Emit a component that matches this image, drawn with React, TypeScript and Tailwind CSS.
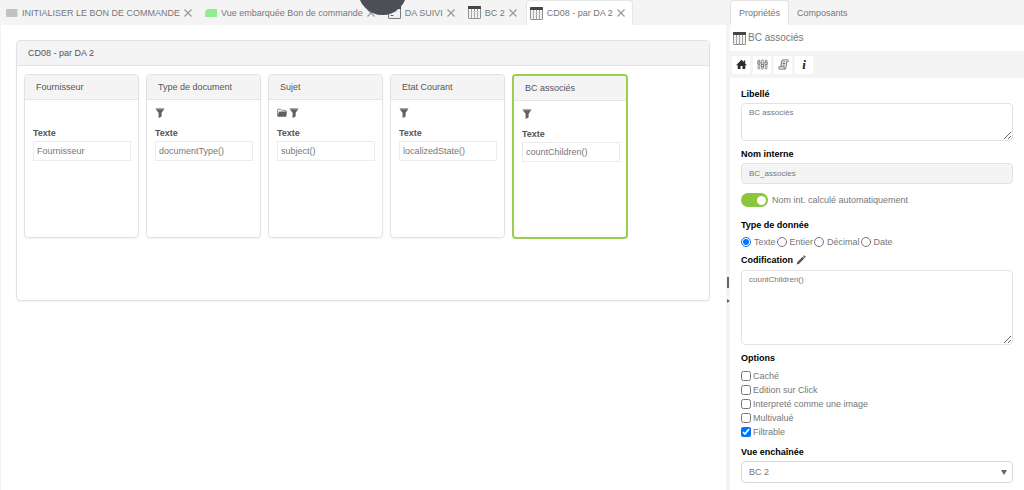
import { useState } from "react";
import type { ReactNode } from "react";

function TableIcon({ className }: { className: string }) {
  return (
    <svg viewBox="0 0 13 13" className={className} aria-hidden="true">
      <rect x="0.5" y="0.5" width="12" height="12" rx="0.5" fill="#fff" stroke="#8f8f8f" />
      <path d="M3.5 3v9.5M6.5 3v9.5M9.5 3v9.5" stroke="#9a9a9a" strokeWidth="1" />
      <path d="M1 5.5h11M1 7.7h11M1 10h11" stroke="#d0d0d0" strokeWidth="0.7" />
      <rect width="13" height="3" rx="0.5" fill="#454545" />
    </svg>
  );
}

function FormIcon({ className }: { className: string }) {
  return (
    <svg viewBox="0 0 13 13" className={className} aria-hidden="true">
      <rect x="0.5" y="0.5" width="12" height="12" rx="0.5" fill="#f0f0f0" stroke="#7a7a7a" />
      <rect width="13" height="3" rx="0.5" fill="#454545" />
      <path d="M2.5 5.5h5M2.5 9.5h3" stroke="#666" />
    </svg>
  );
}

function GrayIcon({ className }: { className: string }) {
  return (
    <svg viewBox="0 0 12 12" className={className} aria-hidden="true">
      <rect y="2" width="11.5" height="8" rx="1" fill="#bdc3c7" />
    </svg>
  );
}

function GreenIcon({ className }: { className: string }) {
  return (
    <svg viewBox="0 0 12 12" className={className} aria-hidden="true">
      <path d="M0 10V4.5L2.2 2H12v8z" fill="#90ee90" />
    </svg>
  );
}

function FilterIcon() {
  return (
    <svg viewBox="0 0 10 10" className="size-[10px]" aria-hidden="true">
      <path d="M0.8 0.2h8.4v1.6H0.8z" fill="#8a8a8a" />
      <path d="M0.9 1.6h8.2L6.6 4.8v3.6L3.6 10V4.8z" fill="#5f5f5f" />
    </svg>
  );
}

function FolderIcon() {
  return (
    <svg viewBox="0 0 10 10" className="size-[10px]" aria-hidden="true">
      <path d="M0.6 8V1.3h3.2l.8 1h4.2V4" fill="none" stroke="#858585" strokeWidth="0.9" />
      <path d="M1.9 3.4H10L9.2 8.7H0.4z" fill="#606060" />
    </svg>
  );
}

function HomeIcon() {
  return (
    <svg viewBox="0 0 12 12" className="size-[11px]" aria-hidden="true">
      <path d="M6 .8 0 6.8h1.9V11h3V7.6h2.2V11h3V6.8H12L10 4.8V1.6H8.5v1.7z" fill="#2b2b2b" />
    </svg>
  );
}

function SlidersIcon() {
  return (
    <svg viewBox="0 0 12 12" className="size-[11px]" aria-hidden="true">
      <g fill="#fff" stroke="#6a6a6a" strokeWidth="0.8">
        <rect x="1.2" y="1" width="1.8" height="10" rx="0.6" />
        <rect x="5.1" y="1" width="1.8" height="10" rx="0.6" />
        <rect x="9" y="1" width="1.8" height="10" rx="0.6" />
      </g>
      <g fill="#fff" stroke="#555" strokeWidth="0.9">
        <rect x="0.8" y="3" width="2.6" height="2.4" rx="0.8" />
        <rect x="4.7" y="6" width="2.6" height="2.4" rx="0.8" />
        <rect x="8.6" y="3.6" width="2.6" height="2.4" rx="0.8" />
      </g>
    </svg>
  );
}

function ScriptIcon() {
  return (
    <svg viewBox="0 0 12 12" className="size-[11px]" aria-hidden="true">
      <g fill="none" stroke="#666" strokeWidth="1">
        <path d="M3.2 8.4 4.1 2Q4.3 1 5.2 1h5.3q1 0 .9 1.1t-1.1 1H9.4L8.5 10q-.2 1-1.1 1H1.8Q.8 11 .9 10l.2-1.5h5.7L6.7 10q0 .9.7 1" />
        <path d="M5.2 3.1h2.8M5 4.9h2.8M4.8 6.7h2.6" />
      </g>
    </svg>
  );
}

function PencilIcon() {
  return (
    <svg viewBox="0 0 10 10" className="size-[10px]" aria-hidden="true">
      <path d="M.6 9.5 1.4 7 6.6 1.8l1.7 1.7L3.1 8.7zM7.1 1.3l.7-.7q.5-.4 1 .1l.6.6q.5.5.1 1l-.7.7z" fill="#555" />
    </svg>
  );
}

function CloseIcon() {
  return (
    <svg viewBox="0 0 8 8" className="size-2" aria-hidden="true">
      <path d="M.5.5l7 7M7.5.5l-7 7" stroke="#999" strokeWidth="1.2" />
    </svg>
  );
}

const tabs = [
  { label: "INITIALISER LE BON DE COMMANDE", Icon: GrayIcon, iconSize: "size-3" },
  { label: "Vue embarquée Bon de commande", Icon: GreenIcon, iconSize: "size-3" },
  { label: "DA SUIVI", Icon: FormIcon, iconSize: "size-[13px]" },
  { label: "BC 2", Icon: TableIcon, iconSize: "size-[13px]" },
  { label: "CD08 - par DA 2", Icon: TableIcon, iconSize: "size-[13px]", active: true },
];

function TabBar() {
  return (
    <div className="relative flex h-[25px] gap-px overflow-hidden bg-[#f4f4f4] pl-0.5">
      {tabs.map(({ label, Icon, iconSize, active }) => (
        <div
          key={label}
          className={
            active
              ? "flex items-center gap-1 rounded-t-sm border border-b-0 border-[#e6e6e6] bg-white pr-[7px] pl-[3px]"
              : "flex items-center gap-1 pr-2 pl-1"
          }
        >
          <button type="button" className="flex items-center gap-1 whitespace-nowrap">
            <Icon className={iconSize} />
            {label}
          </button>
          <button type="button" aria-label={`Fermer ${label}`}>
            <CloseIcon />
          </button>
        </div>
      ))}
      <div className="absolute -top-[34px] left-[358px] size-[49px] rounded-full bg-[#4d5057]" />
    </div>
  );
}

const columns = [
  { title: "Fournisseur", value: "Fournisseur", filter: false, folder: false, selected: false },
  { title: "Type de document", value: "documentType()", filter: true, folder: false, selected: false },
  { title: "Sujet", value: "subject()", filter: true, folder: true, selected: false },
  { title: "Etat Courant", value: "localizedState()", filter: true, folder: false, selected: false },
  { title: "BC associés", value: "countChildren()", filter: true, folder: false, selected: true },
];

function Column({ title, value, filter, folder, selected }: (typeof columns)[number]) {
  return (
    <section
      className={
        selected
          ? "min-h-[165px] w-[116px] shrink-0 overflow-hidden rounded-sm border-2 border-[#98cf4f]"
          : "min-h-[164px] w-[115px] shrink-0 overflow-hidden rounded-sm border border-[#e2e2e2] shadow-xs"
      }
    >
      <h3 className="flex h-[25px] items-center border-b border-[#e4e4e4] bg-[#f4f4f4] px-[11px] text-[#555]">
        {title}
      </h3>
      <div className="px-2 pt-2">
        <div className="flex h-[10px] items-center gap-0.5">
          {folder && <FolderIcon />}
          {filter && <FilterIcon />}
        </div>
        <label className="block pt-[9px] font-bold text-[#555]">
          <span className="block h-[14px]">Texte</span>
          <input
            defaultValue={value}
            className="block h-5 w-[98px] border border-[#ebebeb] px-[3px] font-normal text-[#777] outline-none"
          />
        </label>
      </div>
    </section>
  );
}

function FieldLabel({ htmlFor, children }: { htmlFor: string; children: ReactNode }) {
  return (
    <label htmlFor={htmlFor} className="flex h-3 items-center gap-1 font-bold text-black">
      {children}
    </label>
  );
}

const types = ["Texte", "Entier", "Décimal", "Date"];
const options = ["Caché", "Edition sur Click", "Interpreté comme une image", "Multivalué", "Filtrable"];

function Properties() {
  const [auto, setAuto] = useState(true);
  return (
    <aside className="flex w-[294px] shrink-0 flex-col bg-white">
      <div className="flex h-[25px] bg-[#f4f4f4]">
        <button type="button" className="rounded-t-sm border border-b-0 border-[#e2e2e2] bg-white px-2">
          Propriétés
        </button>
        <button type="button" className="px-2">Composants</button>
      </div>
      <div className="flex h-[26px] items-center gap-0.5 pl-[3px] text-[10px]">
        <TableIcon className="size-[13px]" />
        BC associés
      </div>
      <div className="flex h-[27px] items-center gap-[3px] bg-[#f4f4f4] pl-[2px]">
        <button type="button" aria-label="Accueil" className="flex size-[18px] items-center justify-center bg-white">
          <HomeIcon />
        </button>
        <button type="button" aria-label="Réglages" className="flex size-[18px] items-center justify-center bg-white">
          <SlidersIcon />
        </button>
        <button type="button" aria-label="Script" className="flex size-[18px] items-center justify-center bg-white">
          <ScriptIcon />
        </button>
        <button
          type="button"
          className="flex size-[18px] items-center justify-center bg-white font-['Liberation_Serif',serif] text-[13px] font-bold text-[#222] italic"
        >
          i
        </button>
      </div>

      <form className="flex flex-col px-[11px] pt-[10px] pb-[7px]">
        <FieldLabel htmlFor="libelle">Libellé</FieldLabel>
        <textarea
          id="libelle"
          defaultValue="BC associés"
          className="mt-[3px] h-[38px] rounded-sm border border-[#e2e2e2] px-[7px] py-[3px] text-[8px] outline-none"
        />

        <div className="mt-[7px] flex flex-col gap-[3px]">
          <FieldLabel htmlFor="nom">Nom interne</FieldLabel>
          <input
            id="nom"
            readOnly
            defaultValue="BC_associes"
            className="h-[21px] rounded-sm border border-[#e2e2e2] bg-[#f4f4f4] px-[7px] text-[8px] outline-none"
          />
        </div>

        <label className="mt-[9px] flex h-[14px] items-center gap-1">
          <input
            type="checkbox"
            role="switch"
            checked={auto}
            onChange={(e) => setAuto(e.target.checked)}
            className="flex h-[14px] w-[27px] appearance-none items-center rounded-full bg-[#bbb] px-[2px] before:size-[9px] before:rounded-full before:bg-white checked:justify-end checked:bg-[#8cc63f]"
          />
          Nom int. calculé automatiquement
        </label>

        <fieldset className="mt-3">
          <legend className="h-3 font-bold text-black">Type de donnée</legend>
          <div className="flex gap-px pt-[5px]">
            {types.map((type) => (
              <label key={type} className="flex h-3 items-center gap-[3px]">
                <input
                  type="radio"
                  name="type"
                  defaultChecked={type === "Texte"}
                  className="size-[10px] accent-[#0075ff]"
                />
                {type}
              </label>
            ))}
          </div>
        </fieldset>

        <div className="mt-[6px] flex items-center gap-[3px]">
          <FieldLabel htmlFor="codification">Codification</FieldLabel>
          <button type="button" aria-label="Modifier la codification">
            <PencilIcon />
          </button>
        </div>
        <textarea
          id="codification"
          defaultValue="countChildren()"
          className="mt-[4px] h-[75px] rounded-sm border border-[#e2e2e2] px-[7px] py-[3px] text-[8px] outline-none"
        />

        <fieldset className="mt-[7px]">
          <legend className="h-3 font-bold text-black">Options</legend>
          <div className="flex flex-col items-start gap-[2px] pt-[6px]">
            {options.map((option) => (
              <label key={option} className="flex h-3 items-center gap-[2px]">
                <input
                  type="checkbox"
                  defaultChecked={option === "Filtrable"}
                  className="size-[10px] accent-[#0075ff]"
                />
                {option}
              </label>
            ))}
          </div>
        </fieldset>

        <div className="mt-2 flex flex-col gap-[3px]">
          <FieldLabel htmlFor="vue">Vue enchaînée</FieldLabel>
          <div className="relative">
            <select
              id="vue"
              className="h-[22px] w-full appearance-none rounded-sm border border-[#d9d9d9] bg-white px-[7px] outline-none"
            >
              <option>BC 2</option>
            </select>
            <svg viewBox="0 0 6 5" className="pointer-events-none absolute top-[9px] right-[6px] h-[5px] w-[6px]" aria-hidden="true">
              <path d="M0 0h6L3 5z" fill="#666" />
            </svg>
          </div>
        </div>
      </form>
    </aside>
  );
}

export default function App() {
  return (
    <div className="flex min-h-screen bg-white font-['Liberation_Sans',Arial,sans-serif] text-[9px] leading-3 text-[#777]">
      <main className="flex min-w-0 flex-1 flex-col">
        <TabBar />
        <div className="flex-1 border-l border-[#f4f4f4] pt-[15px] pr-4 pl-[15px]">
          <section className="min-h-[261px] overflow-hidden rounded-sm border border-[#e2e2e2] shadow-xs">
            <h2 className="flex h-[25px] items-center border-b border-[#e4e4e4] bg-[#f4f4f4] px-[11px] text-[#555]">
              CD08 - par DA 2
            </h2>
            <div className="flex items-start gap-[7px] px-[7px] pt-2">
              {columns.map((column) => (
                <Column key={column.title} {...column} />
              ))}
            </div>
          </section>
        </div>
      </main>
      <div className="flex w-1 shrink-0 flex-col items-center gap-[11px] bg-[#f4f4f4] pt-[277px]">
        <div className="h-[11px] w-0.5 bg-[#666]" />
        <svg viewBox="0 0 3 4" className="h-1 w-[3px]" aria-hidden="true">
          <path d="M0 0v4l3-2z" fill="#666" />
        </svg>
      </div>
      <Properties />
    </div>
  );
}
